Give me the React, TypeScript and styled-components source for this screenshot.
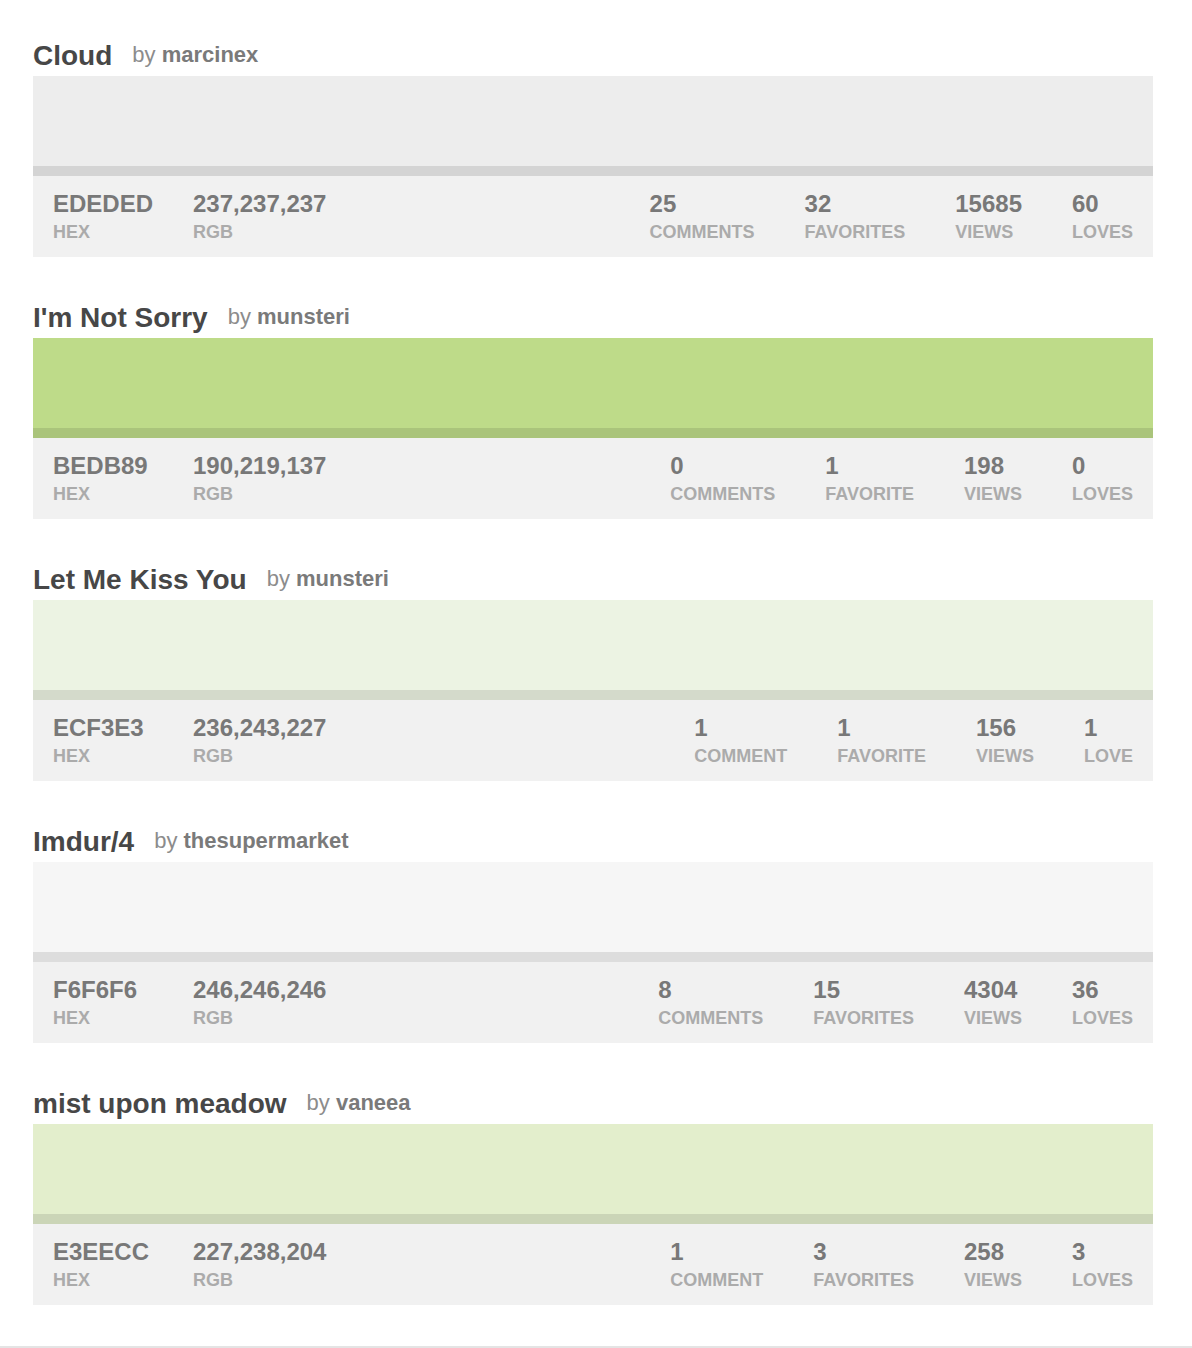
import React from 'react';
import styled, { createGlobalStyle } from 'styled-components';

interface Stat {
  value: number;
  one: string;
  many: string;
}

interface Palette {
  title: string;
  user: string;
  hex: string;
  rgb: string;
  comments: number;
  favorites: number;
  views: number;
  loves: number;
}

const palettes: Palette[] = [
  { title: 'Cloud', user: 'marcinex', hex: 'EDEDED', rgb: '237,237,237', comments: 25, favorites: 32, views: 15685, loves: 60 },
  { title: "I'm Not Sorry", user: 'munsteri', hex: 'BEDB89', rgb: '190,219,137', comments: 0, favorites: 1, views: 198, loves: 0 },
  { title: 'Let Me Kiss You', user: 'munsteri', hex: 'ECF3E3', rgb: '236,243,227', comments: 1, favorites: 1, views: 156, loves: 1 },
  { title: 'Imdur/4', user: 'thesupermarket', hex: 'F6F6F6', rgb: '246,246,246', comments: 8, favorites: 15, views: 4304, loves: 36 },
  { title: 'mist upon meadow', user: 'vaneea', hex: 'E3EECC', rgb: '227,238,204', comments: 1, favorites: 3, views: 258, loves: 3 },
];

const GlobalStyle = createGlobalStyle`
  html, body {
    margin: 0;
    padding: 0;
    background: #fff;
  }
  body {
    font-family: 'Liberation Sans', Arial, Helvetica, sans-serif;
  }
`;

const App: React.FC = () => {
  return (
    <>
      <GlobalStyle />
      <StyledPage>
        {palettes.map((p) => (
          <ColorCard key={p.hex} palette={p} />
        ))}
      </StyledPage>
    </>
  );
};

const ColorCard: React.FC<{ palette: Palette }> = ({ palette }) => {
  const stats: Stat[] = [
    { value: palette.comments, one: 'Comment', many: 'Comments' },
    { value: palette.favorites, one: 'Favorite', many: 'Favorites' },
    { value: palette.views, one: 'View', many: 'Views' },
    { value: palette.loves, one: 'Love', many: 'Loves' },
  ];

  return (
    <StyledCard>
      <StyledHeader>
        <StyledTitle>{palette.title}</StyledTitle>
        <StyledBy>
          by <StyledUser>{palette.user}</StyledUser>
        </StyledBy>
      </StyledHeader>
      <StyledSwatch $color={`#${palette.hex}`} />
      <StyledInfo>
        <StyledColumn $width={140}>
          <StyledValue>{palette.hex}</StyledValue>
          <StyledLabel>Hex</StyledLabel>
        </StyledColumn>
        <StyledColumn>
          <StyledValue>{palette.rgb}</StyledValue>
          <StyledLabel>RGB</StyledLabel>
        </StyledColumn>
        <StyledStats>
          {stats.map((s) => (
            <StyledColumn key={s.many}>
              <StyledValue>{s.value}</StyledValue>
              <StyledLabel>{s.value === 1 ? s.one : s.many}</StyledLabel>
            </StyledColumn>
          ))}
        </StyledStats>
      </StyledInfo>
    </StyledCard>
  );
};

const StyledPage = styled.div`
  padding: 42px 0 41px 33px;
  border-bottom: 2px solid #e4e4e4;
  display: flex;
  flex-direction: column;
  gap: 47px;
`;

const StyledCard = styled.div`
  width: 1120px;
  display: flex;
  flex-direction: column;
`;

const StyledHeader = styled.div`
  display: flex;
  align-items: flex-end;
  margin-bottom: 6px;
`;

const StyledTitle = styled.h2`
  margin: 0;
  font-size: 28px;
  line-height: 28px;
  font-weight: 700;
  color: #474747;
`;

const StyledBy = styled.span`
  margin: 0 0 4px 20px;
  font-size: 22px;
  line-height: 22px;
  color: #8c8c8c;
`;

const StyledUser = styled.b`
  color: #7a7a7a;
`;

const StyledSwatch = styled.div<{ $color: string }>`
  height: 90px;
  background: ${(p) => p.$color};
  border-bottom: 10px solid rgba(0, 0, 0, 0.1);
  box-shadow: inset 0 -10px 0 ${(p) => p.$color};
`;

const StyledInfo = styled.div`
  display: flex;
  background: #f1f1f1;
  padding: 15px 20px 15px;
`;

const StyledStats = styled.div`
  display: flex;
  margin-left: auto;
  gap: 50px;
`;

const StyledColumn = styled.div<{ $width?: number }>`
  display: flex;
  flex-direction: column;
  ${(p) => (p.$width ? `width: ${p.$width}px;` : '')}
`;

const StyledValue = styled.div`
  font-size: 24px;
  line-height: 26px;
  font-weight: 700;
  color: #787878;
`;

const StyledLabel = styled.div`
  margin-top: 5px;
  font-size: 18px;
  line-height: 20px;
  font-weight: 700;
  text-transform: uppercase;
  color: #ababab;
`;

export default App;
